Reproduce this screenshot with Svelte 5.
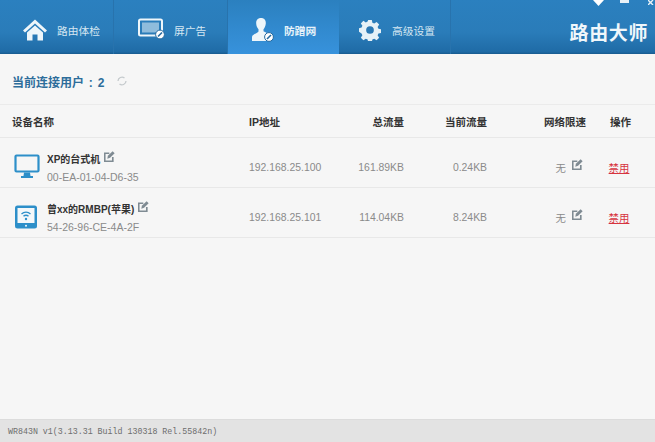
<script>
  const tabs = [
    { label: '路由体检', icon: 'home' },
    { label: '屏广告', icon: 'screen' },
    { label: '防蹭网', icon: 'user', active: true },
    { label: '高级设置', icon: 'gear' }
  ];
  const devices = [
    { name: 'XP的台式机', mac: '00-EA-01-04-D6-35', ip: '192.168.25.100', total: '161.89KB', now: '0.24KB', icon: 'pc' },
    { name: '曾xx的RMBP(苹果)', mac: '54-26-96-CE-4A-2F', ip: '192.168.25.101', total: '114.04KB', now: '8.24KB', icon: 'pad' }
  ];
</script>

{#snippet edit()}
  <svg class="edit" viewBox="0 0 12 12" width="11" height="11">
    <path d="M9.6 6.5v4.7H.8V2.400h5" fill="none" stroke="#7f8b93" stroke-width="1.800" />
    <path d="M3.600 8.400l.6-3.200L9.400.4l2.200 2.100-5 4.900z" fill="#7f8b93" />
  </svg>
{/snippet}

{#snippet forbid(x, y)}
  <circle cx={x} cy={y} r="4.4" fill="#fff" stroke="#24699f" stroke-width="1" />
  <path d="M{x - 2} {y + 2}l4 -4" stroke="#24699f" stroke-width="1.6" />
{/snippet}

<div class="window">
  <header class="topbar">
    <nav class="tabs">
      {#each tabs as tab}
        <div class="tab" class:active={tab.active}>
          {#if tab.icon === 'home'}
            <svg viewBox="0 0 26 24" width="26" height="24" class="home">
              <path d="M1 12.500L13 1.500l12 11-2 2L13 5.500l-10 9z" fill="#eef6fa" />
              <path d="M5 14.500l8-7 8 7v8h-5.500v-6h-5v6H5z" fill="#eef6fa" />
            </svg>
          {:else if tab.icon === 'screen'}
            <svg viewBox="0 0 28 22" width="28" height="22" class="screen">
              <rect x="1" y="1.500" width="23" height="16" rx="1.500" fill="none" stroke="#eef6fa" stroke-width="2" />
              <rect x="4" y="4.500" width="17" height="10" fill="#8fbcdc" />
              {@render forbid(22, 16.5)}
            </svg>
          {:else if tab.icon === 'user'}
            <svg viewBox="0 0 24 26" width="24" height="26" class="user">
              <path d="M10 1c3.600 0 5 2.500 4.800 5.500-.2 2.500-1.200 4.500-2.300 5.800v2l3 1.400v4.800L15 24H1v-4c0-2.500 5.500-3.800 6.500-5.500v-2.200C6.200 10.800 5.300 8.800 5.200 6.500 5 3.500 6.500 1 10 1z" fill="#eef6fa" />
              {@render forbid(18, 20)}
            </svg>
          {:else}
            <svg viewBox="0 0 24 24" width="22" height="22" class="gear">
              <path d="M10 1h4l.6 3 2 .9 2.600-1.700 2.800 2.800-1.700 2.600.9 2 2.800.6v4l-2.800.6-.9 2 1.700 2.600-2.800 2.800-2.600-1.700-2 .9-.6 2.800h-4l-.6-2.800-2-.9-2.600 1.700-2.800-2.800 1.700-2.600-.9-2L0 14v-4l2.800-.6.9-2L2 4.800 4.800 2l2.600 1.700 2-.9z" fill="#e6f1f7" />
              <circle cx="12" cy="12" r="4.200" fill="#2a78b4" />
            </svg>
          {/if}
          <span>{tab.label}</span>
        </div>
      {/each}
    </nav>
    <div class="controls">
      <svg viewBox="0 0 11 6" width="11" height="6"><path d="M0 0h11L5.500 6z" fill="#fff" /></svg>
      <i class="min"></i>
      <svg viewBox="0 0 7 5" width="7" height="5"><path d="M0 0l5 5M5 0L0 5" stroke="#e8f1f7" stroke-width="1.400" /></svg>
    </div>
    <div class="brand">路由大师</div>
  </header>

  <main>
    <div class="summary">
      <span>当前连接用户 : 2</span>
      <svg viewBox="0 0 12 12" width="12" height="12">
        <path d="M2 6a4 4 0 0 1 6.500-3M10 6a4 4 0 0 1-6.500 3" fill="none" stroke="#c5cacd" stroke-width="1.300" />
      </svg>
    </div>

    <div class="row head">
      <div class="name">设备名称</div>
      <div class="ip">IP地址</div>
      <div class="total">总流量</div>
      <div class="now">当前流量</div>
      <div class="limit">网络限速</div>
      <div class="op">操作</div>
    </div>

    {#each devices as d}
      <div class="row item">
        <div class="name device">
          {#if d.icon === 'pc'}
            <svg viewBox="0 0 26 26" width="26" height="26" class="dev-icon">
              <rect x="1.500" y="1.500" width="23" height="16" rx="1" fill="#f6f6f6" stroke="#2d8fc9" stroke-width="2.200" />
              <path d="M10 18.500h6l.5 3.500H19v2H7v-2h2.500z" fill="#2d8fc9" />
            </svg>
          {:else}
            <svg viewBox="0 0 26 26" width="26" height="26" class="dev-icon">
              <rect x="1" y="1.500" width="22" height="23" rx="2.500" fill="#2d8fc9" />
              <rect x="3.500" y="4" width="17" height="15" fill="#f4f8fa" />
              <path d="M7.500 10a6.500 6.500 0 0 1 9 0M9.500 12.300a3.500 3.500 0 0 1 5 0" fill="none" stroke="#2d8fc9" stroke-width="1.300" />
              <circle cx="12" cy="15" r="1.200" fill="#2d8fc9" />
              <circle cx="12" cy="21.700" r="1" fill="#f4f8fa" />
            </svg>
          {/if}
          <div class="info">
            <div class="title"><b>{d.name}</b>{@render edit()}</div>
            <div class="mac">{d.mac}</div>
          </div>
        </div>
        <div class="ip">{d.ip}</div>
        <div class="total">{d.total}</div>
        <div class="now">{d.now}</div>
        <div class="limit"><span>无</span>{@render edit()}</div>
        <div class="op"><a href="#top">禁用</a></div>
      </div>
    {/each}
  </main>

  <footer>WR843N v1(3.13.31 Build 130318 Rel.55842n)</footer>
</div>

<style>
  :global(body) {
    background: #f6f6f6;
  }
  .window {
    width: 655px;
    height: 442px;
    display: flex;
    flex-direction: column;
    overflow: hidden;
    font-family: "Liberation Sans", "Noto Sans CJK SC", sans-serif;
    background: #f6f6f6;
  }
  .topbar {
    position: relative;
    height: 54px;
    flex: none;
    display: flex;
    background: linear-gradient(#2b80bf 0%, #2a7cb9 60%, #1f6ba6 96%, #175a8e 100%);
  }
  .tabs {
    display: flex;
    height: 100%;
  }
  .tab {
    display: flex;
    align-items: center;
    color: #d5e7f2;
    font-size: 10.75px;
    width: 114px;
    box-sizing: border-box;
    border-right: 1px solid #2873ad;
    padding-top: 6px;
  }
  .tab:nth-child(3) {
    width: 111px;
    border-right: none;
  }
  .tab:nth-child(4) {
    width: 112px;
  }
  .tab.active {
    background: linear-gradient(#2b80bf, #3792dc);
    color: #e6f2f9;
    font-weight: bold;
  }
  .home {
    margin-left: 22px;
    margin-right: 9px;
  }
  .screen {
    margin-left: 24px;
    margin-right: 8px;
    margin-top: -3px;
  }
  .user {
    margin-left: 23px;
    margin-right: 9px;
  }
  .gear {
    margin-left: 20px;
    margin-right: 11px;
  }
  .controls {
    position: absolute;
    top: 0;
    right: 0;
    width: 62px;
    display: flex;
    align-items: flex-start;
  }
  .min {
    width: 9px;
    height: 3px;
    margin: 0 19px 0 16px;
    background: #e8f1f7;
  }
  .brand {
    margin-left: auto;
    align-self: center;
    margin-right: 7px;
    margin-top: 9px;
    color: #f0f7fb;
    font-size: 19px;
    font-weight: bold;
    letter-spacing: 0.6px;
  }
  main {
    flex: 1;
  }
  .summary {
    height: 51px;
    box-sizing: border-box;
    padding: 4px 0 0 12px;
    display: flex;
    align-items: center;
    gap: 12px;
    color: #2d6d9b;
    font-size: 12px;
    font-weight: bold;
    border-bottom: 1px solid #ebebeb;
  }
  .summary span {
    word-spacing: 1.5px;
  }
  .row {
    display: flex;
    align-items: center;
    border-bottom: 1px solid #e8e8e8;
    color: #8a8a8a;
    font-size: 10.4px;
  }
  .head {
    height: 32px;
    color: #333;
    font-weight: bold;
    font-size: 10.5px;
  }
  .item {
    height: 40px;
    padding-top: 9px;
  }
  .name {
    width: 249px;
    box-sizing: border-box;
    padding-left: 12px;
    flex: none;
  }
  .ip {
    width: 82px;
    flex: none;
  }
  .total {
    width: 73px;
    flex: none;
    text-align: right;
  }
  .now {
    width: 83px;
    flex: none;
    text-align: right;
  }
  .limit {
    width: 96px;
    flex: none;
    text-align: right;
  }
  .item .limit {
    display: flex;
    justify-content: flex-end;
    align-items: center;
    gap: 6px;
  }
  .item .limit .edit {
    margin-bottom: 5px;
  }
  .op {
    width: 72px;
    flex: none;
    text-align: center;
  }
  .head .limit {
    width: 99px;
  }
  .head .op {
    width: 69px;
  }
  .device {
    display: flex;
    align-items: center;
    gap: 7px;
    padding-left: 14px;
  }
  .dev-icon {
    flex: none;
  }
  .info {
    display: flex;
    flex-direction: column;
    gap: 4px;
    margin-top: 3px;
  }
  .title {
    display: flex;
    align-items: flex-start;
    gap: 4px;
    color: #333;
    font-size: 10px;
    line-height: 14px;
  }
  .title .edit {
    margin-top: -2px;
  }
  .mac {
    color: #8a8a8a;
    font-size: 10.5px;
    line-height: 13px;
  }
  a {
    color: #d6343f;
    text-decoration: underline;
  }
  footer {
    margin-top: auto;
    height: 23px;
    flex: none;
    box-sizing: border-box;
    background: #e3e3e3;
    border-top: 1px solid #dcdcdc;
    padding: 7px 0 0 8px;
    font-family: "Liberation Mono", monospace;
    font-size: 8.3px;
    color: #6e6e6e;
  }
</style>
